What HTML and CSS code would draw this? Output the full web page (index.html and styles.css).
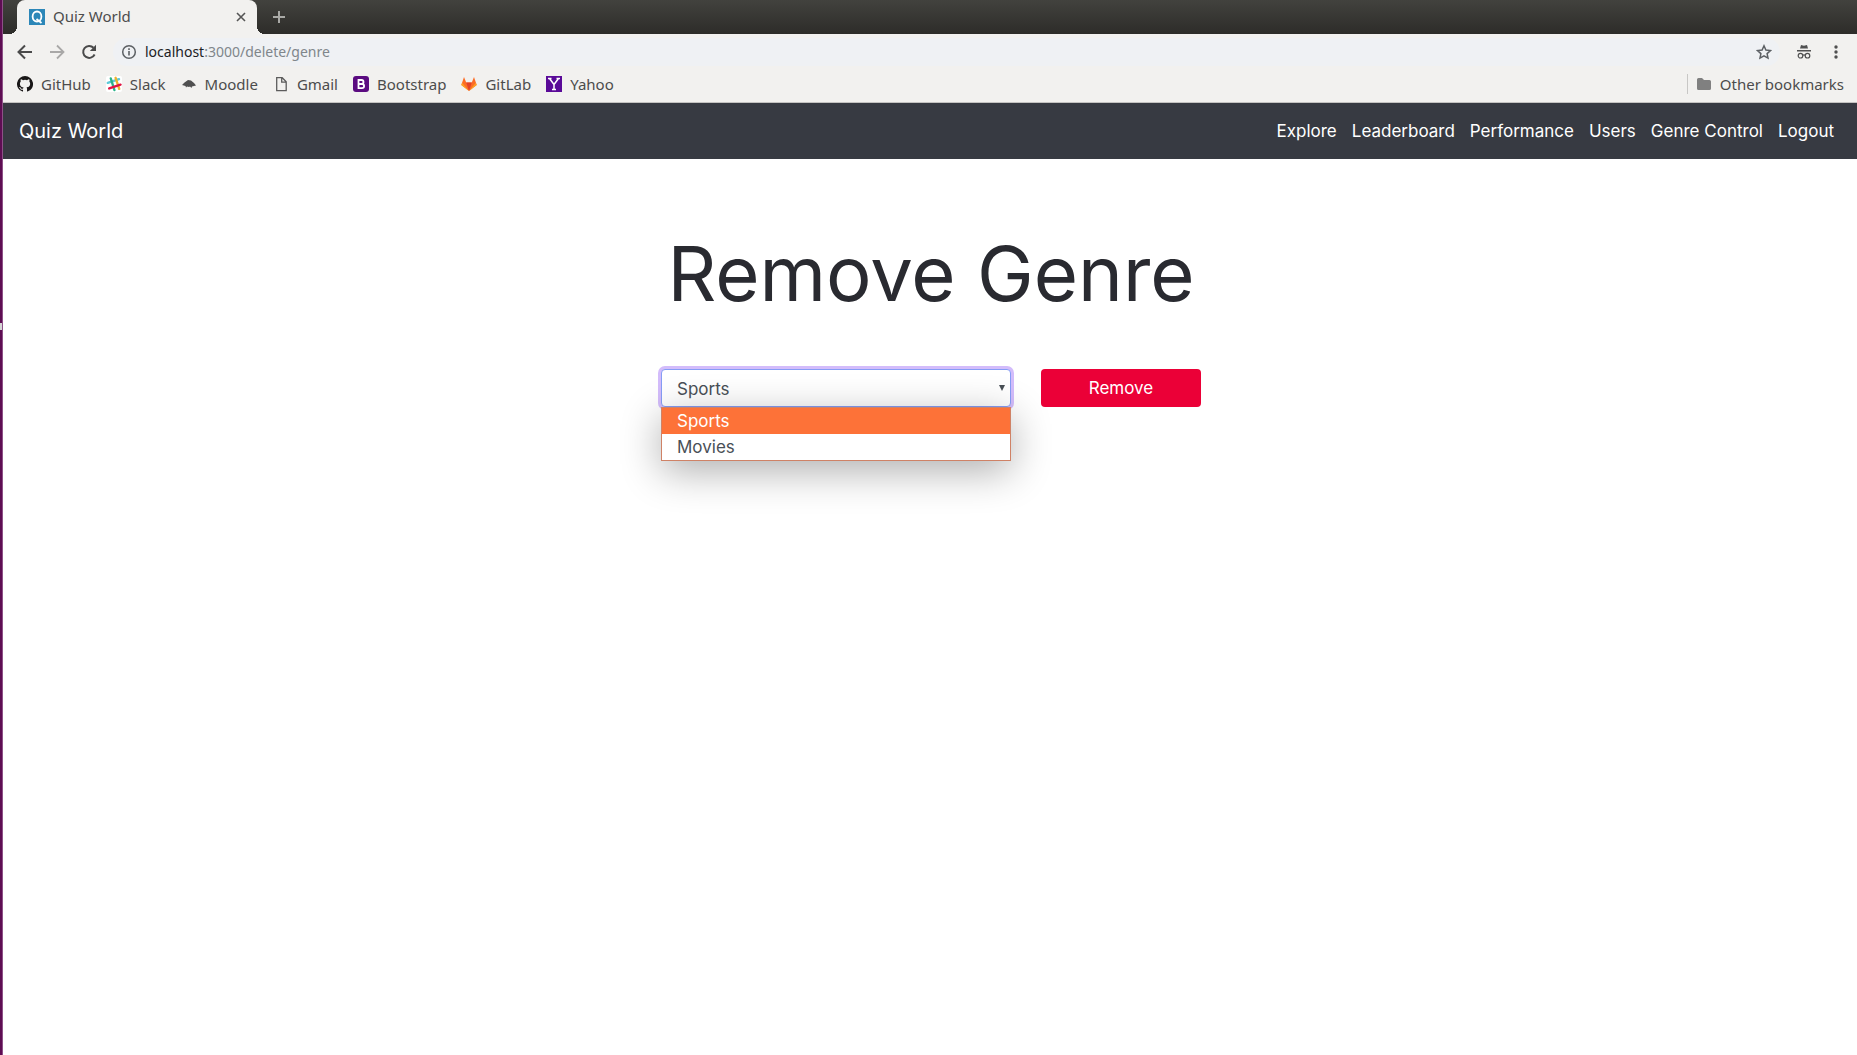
FILE: index.html
```html
<!DOCTYPE html>
<html lang="en">
<head>
<meta charset="utf-8">
<title>Quiz World</title>
<link rel="stylesheet" href="styles.css">
</head>
<body>
<div class="launcher-edge"><span class="launcher-mark"></span></div>
<div class="window">
  <div class="tab-strip">
    <div class="tab">
      <svg class="icon" viewBox="0 0 16 16"><rect width="16" height="16" fill="#2c87b8"/><ellipse cx="8" cy="7.500" rx="4.400" ry="5" fill="none" stroke="#fff" stroke-width="1.800"/><path d="M7.500 10l5 4" stroke="#fff" stroke-width="1.800"/></svg>
      <span class="tab-title">Quiz World</span>
      <button class="plain" aria-label="Close tab"><svg width="10" height="10" viewBox="0 0 10 10"><path d="M1 1l8 8M9 1l-8 8" stroke="#555" stroke-width="1.600"/></svg></button>
    </div>
    <button class="plain new-tab" aria-label="New tab"><svg width="12" height="12" viewBox="0 0 12 12"><path d="M6 0v12M0 6h12" stroke="#a9a9a6" stroke-width="2"/></svg></button>
  </div>
  <div class="toolbar">
    <button class="plain" aria-label="Back"><svg class="icon" viewBox="0 0 16 16"><path d="M15 8H2M8 1.500L1.500 8 8 14.500" fill="none" stroke="#4a4a4a" stroke-width="2"/></svg></button>
    <button class="plain" aria-label="Forward"><svg class="icon" viewBox="0 0 16 16"><path d="M1 8h13M8 1.500L14.500 8 8 14.500" fill="none" stroke="#a9a8a7" stroke-width="1.800"/></svg></button>
    <button class="plain" aria-label="Reload"><svg class="icon" viewBox="0 0 16 16"><path d="M13.600 10.500A6 6 0 1 1 12.500 3.700" fill="none" stroke="#4a4a4a" stroke-width="2"/><path d="M15 .800V7H8.800z" fill="#4a4a4a"/></svg></button>
    <div class="address">
      <svg class="icon" viewBox="0 0 16 16"><circle cx="8" cy="8" r="6.300" fill="none" stroke="#5c6064" stroke-width="1.500"/><path d="M8 7v4.500M8 4.300v1.700" stroke="#5c6064" stroke-width="1.600"/></svg>
      <div class="url"><b>localhost</b>:3000/delete/genre</div>
      <button class="plain" aria-label="Bookmark this page"><svg class="icon" viewBox="0 0 16 16"><path d="M8 1.800l1.900 4.200 4.600.500-3.400 3.100.900 4.500L8 11.800l-4 2.300.900-4.500L1.500 6.500l4.600-.500z" fill="none" stroke="#5c6064" stroke-width="1.500"/></svg></button>
    </div>
    <svg class="icon" viewBox="0 0 16 16"><path d="M4 4.500L5 1l3 .700L11 1l1 3.500zM1 6h14v1.500H1z" fill="#505050"/><g fill="none" stroke="#505050" stroke-width="1.200"><circle cx="4.500" cy="11.700" r="2.300"/><circle cx="11.500" cy="11.700" r="2.300"/><path d="M6.800 11.300q1.200-.800 2.400 0"/></g></svg>
    <button class="plain" aria-label="Menu"><svg class="icon" viewBox="0 0 16 16" fill="#505050"><circle cx="8" cy="3" r="1.700"/><circle cx="8" cy="8" r="1.700"/><circle cx="8" cy="13" r="1.700"/></svg></button>
  </div>
  <div class="bookmarks">
    <a href="#"><svg class="icon" viewBox="0 0 16 16"><path fill="#191717" d="M8 0a8 8 0 0 0-2.530 15.590c.400.070.550-.170.550-.380v-1.490c-2.010.370-2.530-.490-2.690-.940-.090-.230-.480-.940-.820-1.130-.280-.150-.680-.520-.010-.530.630-.010 1.080.580 1.230.820.720 1.210 1.870.870 2.330.660.070-.520.280-.870.510-1.070-1.780-.200-3.640-.890-3.640-3.950 0-.870.310-1.590.820-2.150-.080-.200-.360-1.020.080-2.120 0 0 .670-.210 2.200.820a7.400 7.400 0 0 1 4 0c1.530-1.040 2.200-.820 2.200-.820.440 1.100.160 1.920.080 2.120.510.560.820 1.270.820 2.150 0 3.070-1.870 3.750-3.650 3.950.290.250.540.730.540 1.480v2.200c0 .210.150.460.550.380A8 8 0 0 0 8 0"/></svg>GitHub</a>
    <a href="#"><svg class="icon" viewBox="0 0 16 16"><rect width="16" height="16" rx="2" fill="#fff"/><g stroke-width="2.400" fill="none" stroke-linecap="round"><path d="M1.800 6.800L13 3.200" stroke="#5cc9d8"/><path d="M4.800 2.500l3.600 11.500" stroke="#2bb38a"/><path d="M9.600 1.800l3.600 11" stroke="#ecb22e"/><path d="M3.200 12.400l11.300-3.700" stroke="#e01543"/></g></svg>Slack</a>
    <a href="#"><svg class="icon" viewBox="0 0 16 16"><path d="M1 9l2.500-2.500L7 4l3 .500L13 7l2 2.500-2 .500-2 .500-.500 1.500-1.500-1.500-1 .500-2-.500-1 1-.500-1.500z" fill="#505050"/></svg>Moodle</a>
    <a href="#"><svg class="icon" viewBox="0 0 16 16"><path d="M3.700 1.700h5.500l4 4v9H3.700zM8.700 2v4.200H13" fill="none" stroke="#5c5c5c" stroke-width="1.300"/></svg>Gmail</a>
    <a href="#"><svg class="icon" viewBox="0 0 16 16"><rect width="16" height="16" rx="3" fill="#5b0b80"/><path d="M5.500 4h3a2 2 0 0 1 0 4h-3zM5.500 8h3.500a2 2 0 0 1 0 4.200H5.500z" fill="none" stroke="#fff" stroke-width="1.800"/></svg>Bootstrap</a>
    <a href="#"><svg class="icon" viewBox="0 0 16 16"><path d="M.300 9L3 1l2.200 5.500h5.600L13 1l2.700 8L8 15z" fill="#fc6d26"/><path d="M5.200 6.500h5.600L8 15z" fill="#e24329"/><path d="M.300 9l.800-2.300L8 15zM15.700 9l-.800-2.300L8 15z" fill="#fca326"/></svg>GitLab</a>
    <a href="#"><svg class="icon" viewBox="0 0 16 16"><rect width="16" height="16" fill="#5a0a98"/><path d="M3.500 2.500L8 8.500l4.500-6M8 8v5M6 13.500h4M2 2.500h3.500M10.500 2.500H14" fill="none" stroke="#fff" stroke-width="1.500"/></svg>Yahoo</a>
    <a href="#" class="other"><svg class="icon" viewBox="0 0 16 16"><path d="M1 3.500Q1 2 2.500 2H6l2 2h5.500Q15 4 15 5.500v7q0 1.500-1.500 1.500h-11Q1 14 1 12.500z" fill="#808080"/></svg>Other bookmarks</a>
  </div>
  <nav class="navbar">
    <a href="#" class="brand">Quiz World</a>
    <div class="links">
      <a href="#">Explore</a><a href="#">Leaderboard</a><a href="#">Performance</a><a href="#">Users</a><a href="#">Genre Control</a><a href="#">Logout</a>
    </div>
  </nav>
  <main class="content">
    <h1>Remove Genre</h1>
    <form class="genre-form">
      <div class="picker">
        <select aria-label="Genre"><option>Sports</option><option>Movies</option></select>
        <svg class="arrow" viewBox="0 0 6 6"><path d="M0 0h6L3 6z" fill="#495057"/></svg>
        <ul class="menu"><li class="active">Sports</li><li>Movies</li></ul>
      </div>
      <button type="button" class="remove">Remove</button>
    </form>
  </main>
</div>
</body>
</html>
```
FILE: styles.css
```css
* { box-sizing: border-box; }
body {
  margin: 0;
  min-height: 100vh;
  display: flex;
  background: #fff;
  font-family: Inter, "Liberation Sans", sans-serif;
  font-size: 17px;
}
a { color: inherit; text-decoration: none; }
svg { display: block; flex: none; }
.icon { width: 16px; height: 16px; }
.plain { border: 0; padding: 0; background: none; }

.launcher-edge {
  flex: none;
  width: 3px;
  padding-top: 323px;
  background: #5e0d53;
  border-right: 1px solid #8d5087;
}
.launcher-mark { display: block; height: 7px; background: #d5d5d5; }
.window { flex: 1; min-width: 0; }

.tab-strip, .toolbar, .bookmarks {
  display: flex;
  align-items: center;
  font-family: "Noto Sans", sans-serif;
  font-size: 15px;
  line-height: 20px;
  color: #4c4c4c;
}
.tab-strip {
  height: 34px;
  padding-left: 14px;
  background: linear-gradient(#42423e, #2d2c29);
}
.tab {
  position: relative;
  display: flex;
  align-items: center;
  gap: 8px;
  width: 240px;
  height: 34px;
  padding: 0 11px 0 12px;
  border-radius: 8px 8px 0 0;
  background: #f2f1ef;
}
.tab::before, .tab::after {
  content: "";
  position: absolute;
  bottom: 0;
  width: 8px;
  height: 8px;
}
.tab::before { right: 100%; background: radial-gradient(circle at 0 0, transparent 8px, #f2f1ef 8px); }
.tab::after { left: 100%; background: radial-gradient(circle at 100% 0, transparent 8px, #f2f1ef 8px); }
.tab-title { flex: 1; padding-bottom: 2px; }
.new-tab { margin-left: 16px; }
.toolbar {
  height: 36px;
  gap: 16px;
  padding: 0 13px 0 14px;
  background: #f2f1ef;
  font-size: 14px;
}
.address {
  flex: 1;
  display: flex;
  align-items: center;
  gap: 8px;
  height: 28px;
  padding: 0 8px;
  border-radius: 14px;
  background: #eff1f4;
}
.url { flex: 1; color: #80868b; }
.url b { font-weight: 400; color: #202124; }
.bookmarks {
  height: 33px;
  gap: 15px;
  padding: 0 13px 4px 14px;
  background: #f2f1ef;
  border-bottom: 1px solid #c4c3c1;
}
.bookmarks a { display: flex; align-items: center; gap: 8px; }
.bookmarks .other {
  margin-left: auto;
  padding-left: 8px;
  border-left: 1px solid #c8c7c5;
}

.navbar {
  display: flex;
  align-items: center;
  justify-content: space-between;
  height: 56px;
  padding: 0 23px 0 16px;
  background: #373a42;
  color: #fff;
}
.brand { font-size: 20px; }
.links { display: flex; gap: 15px; }

.content {
  display: flex;
  flex-direction: column;
  align-items: center;
  padding: 70px 15px 70px 17px;
}
h1 {
  margin: 0 0 52px;
  font-size: 76px;
  line-height: 88px;
  font-weight: 400;
  color: #292a30;
}
.genre-form { display: flex; gap: 30px; }
.picker { position: relative; width: 350px; }
select {
  appearance: none;
  display: block;
  width: 100%;
  height: 38px;
  padding: 2px 15px 0;
  border: 1px solid #869df5;
  border-radius: 4px;
  background: #fff;
  box-shadow: 0 0 0 3px #d3bcfb;
  font: inherit;
  color: #495057;
}
.arrow {
  position: absolute;
  top: 16px;
  right: 6px;
  width: 6px;
  height: 6px;
}
.menu {
  position: absolute;
  top: 38px;
  left: 0;
  width: 100%;
  margin: 0;
  padding: 0;
  list-style: none;
  border: 1px solid #cf8266;
  background: #fff;
  box-shadow: 0 10px 40px rgba(0, 0, 0, 0.32);
  line-height: 26px;
  color: #495057;
}
.menu li { padding: 0 15px; }
.menu .active { background: #fd7238; color: #fff; }
.remove {
  width: 160px;
  height: 38px;
  border: 0;
  border-radius: 4px;
  background: #eb0037;
  font: inherit;
  color: #fff;
}
```
